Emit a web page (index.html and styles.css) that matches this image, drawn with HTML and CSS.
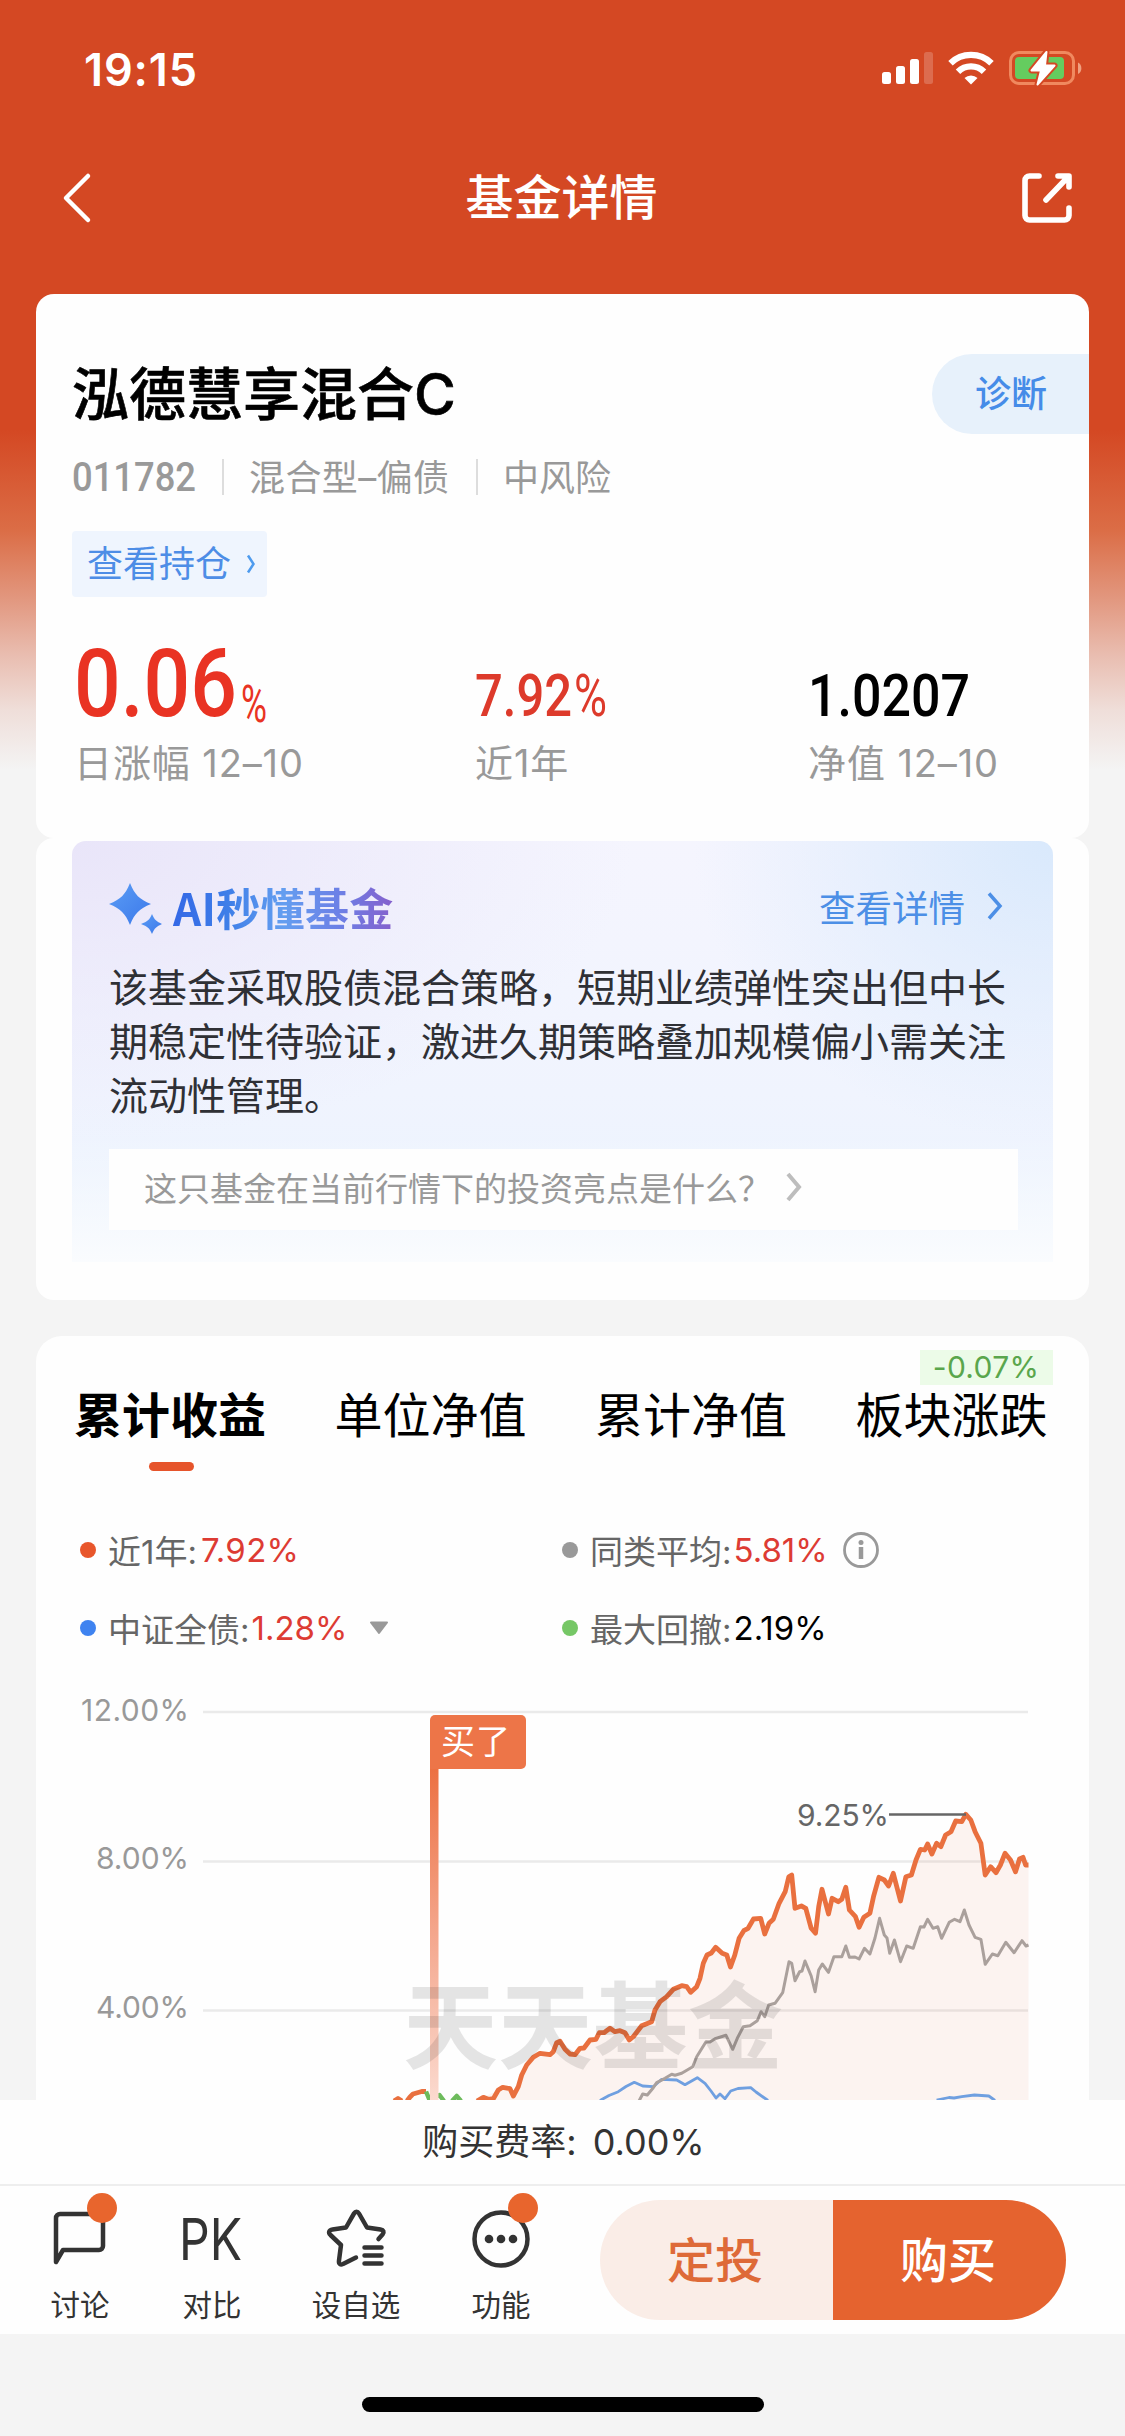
FILE: index.html
```html
<!DOCTYPE html>
<html lang="zh-CN">
<head>
<meta charset="utf-8">
<title>基金详情</title>
<link rel="stylesheet" href="styles.css">
</head>
<body>
<div class="screen">
  <main class="content">
    <div class="status-bar">
      <span class="clock">19:15</span>
      <svg class="status-icons" width="204" height="40" viewBox="0 0 204 40">
        <g fill="#fff">
          <rect x="2" y="22" width="9" height="12" rx="2.5"/>
          <rect x="16" y="16" width="9" height="18" rx="2.5"/>
          <rect x="30" y="9" width="9" height="25" rx="2.5"/>
          <rect x="44" y="2" width="9" height="32" rx="2.5" opacity=".2"/>
        </g>
        <g fill="none" stroke="#fff" stroke-width="6.4">
          <path d="M70.5 13.2a29.5 29.5 0 0 1 41 0"/>
          <path d="M78 21.7a18.6 18.6 0 0 1 26 0"/>
        </g>
        <path d="M84.5 28a9.6 9.6 0 0 1 13 0L91 34.6z" fill="#fff"/>
        <rect x="130.5" y="2.500" width="63" height="31" rx="8.500" fill="none" stroke="#f0895f" stroke-width="3"/>
        <path d="M198 12.500c4.500 2 4.500 9.500 0 11.500z" fill="#f0a080"/>
        <rect x="135" y="7" width="49" height="22" rx="4" fill="#65cc5f"/>
        <path d="M166.500 2 151.500 20.500h9.500L157.500 34.500 174.500 15.500h-9.500z" fill="#fff" stroke="#d44823" stroke-width="6" stroke-linejoin="round"/>
        <path d="M166.500 2 151.500 20.500h9.500L157.500 34.500 174.500 15.500h-9.500z" fill="#fff" stroke="#fff" stroke-width="2" stroke-linejoin="round"/>
      </svg>
    </div>

    <header class="nav">
      <svg width="32" height="54" viewBox="0 0 32 54" fill="none" stroke="#fff" stroke-width="4.500" stroke-linecap="round" stroke-linejoin="round"><path d="M27 5 5 27l22 22"/></svg>
      <h1>基金详情</h1>
      <svg width="54" height="54" viewBox="0 0 54 54" fill="none" stroke="#fff" stroke-width="5.600" stroke-linecap="round" stroke-linejoin="round"><path d="M19 5H9.500a4.500 4.500 0 0 0-4.500 4.500v35A4.500 4.500 0 0 0 9.500 49h35a4.500 4.500 0 0 0 4.500-4.500V37M38 5h11v11M48 6 26 29"/></svg>
    </header>

    <section class="card fund">
      <div class="fund-head">
        <h2>泓德慧享混合C</h2>
        <a class="diagnose">诊断</a>
      </div>
      <div class="meta">
        <svg width="124" height="48" viewBox="0 0 124 48"><text class="din" x="0" y="38" font-size="41" textLength="124" lengthAdjust="spacingAndGlyphs" fill="#999">011782</text></svg>
        <span class="sep"></span>
        <span class="meta-type">混合型–偏债</span>
        <span class="sep"></span>
        <span>中风险</span>
      </div>
      <a class="holdings">查看持仓
        <svg width="10" height="20" viewBox="0 0 10 20" fill="none" stroke="#4e9bee" stroke-width="2.500"><path d="m2 1.500 5.500 8.500L2 18.500"/></svg>
      </a>
      <div class="metrics">
        <div class="metric">
          <svg width="200" height="80" viewBox="0 0 200 80" fill="#e93323">
            <text class="din" x="0" y="69" font-size="94"><tspan textLength="163" lengthAdjust="spacingAndGlyphs">0.06</tspan><tspan class="thin" x="167" y="75" font-size="52" textLength="26" lengthAdjust="spacingAndGlyphs">%</tspan></text>
          </svg>
          <span>日涨幅 12–10</span>
        </div>
        <div class="metric">
          <svg width="140" height="80" viewBox="0 0 140 80" fill="#dd3a2b"><text class="din" y="69" font-size="59"><tspan x="0" textLength="97" lengthAdjust="spacingAndGlyphs">7.92</tspan><tspan class="thin" x="99" textLength="33" lengthAdjust="spacingAndGlyphs">%</tspan></text></svg>
          <span>近1年</span>
        </div>
        <div class="metric">
          <svg width="180" height="80" viewBox="0 0 180 80"><text class="din" x="0" y="69" font-size="59" textLength="162" lengthAdjust="spacingAndGlyphs">1.0207</text></svg>
          <span>净值 12–10</span>
        </div>
      </div>
    </section>

    <section class="card ai-card">
      <div class="ai-panel">
        <div class="ai-head">
          <svg width="54" height="54" viewBox="0 0 54 54">
            <defs><linearGradient id="spark" x1="0" y1="0" x2="1" y2="1"><stop offset="0" stop-color="#5b9df5"/><stop offset="1" stop-color="#3b78ea"/></linearGradient></defs>
            <path d="M21 1C26 13 30 17 42 22 30 27 26 31 21 43 16 31 12 27 0 22 12 17 16 13 21 1z" fill="url(#spark)"/>
            <path d="M43 32C45.500 38 47.500 39.500 53 42 47.500 44.500 45.500 46 43 52 40.500 46 38.500 44.500 32 42 38.500 39.500 40.500 38 43 32z" fill="url(#spark)"/>
          </svg>
          <h3>AI秒懂基金</h3>
          <a>查看详情
            <svg width="18" height="30" viewBox="0 0 18 30" fill="none" stroke="#4c8fe6" stroke-width="3.500"><path d="m3 2.500 11 12.500L3 27.500"/></svg>
          </a>
        </div>
        <p>该基金采取股债混合策略，短期业绩弹性突出但中长期稳定性待验证，激进久期策略叠加规模偏小需关注流动性管理。</p>
        <div class="question">
          <span>这只基金在当前行情下的投资亮点是什么？</span>
          <svg width="20" height="32" viewBox="0 0 20 32" fill="none" stroke="#bdbdbd" stroke-width="4"><path d="m4 3 11 13L4 29"/></svg>
        </div>
      </div>
    </section>

    <section class="card returns">
      <nav class="tabs">
        <a class="active">累计收益</a>
        <a>单位净值</a>
        <a>累计净值</a>
        <a>板块涨跌<span class="tag">-0.07%</span></a>
      </nav>
      <div class="legend">
        <div><i class="dot orange"></i><span>近1年:</span><b class="up wide">7.92%</b></div>
        <div><i class="dot gray"></i><span>同类平均:</span><b class="up">5.81%</b>
          <svg class="info" width="38" height="38" viewBox="0 0 38 38"><circle cx="19" cy="19" r="16.500" fill="none" stroke="#999" stroke-width="2.800"/><path d="M19 16v12" stroke="#999" stroke-width="4.500"/><circle cx="19" cy="11.500" r="2.500" fill="#999"/></svg>
        </div>
        <div><i class="dot blue"></i><span>中证全债:</span><b class="up">1.28%</b>
          <svg class="caret" width="20" height="14" viewBox="0 0 20 14"><path d="M2 1.500h16L10 12z" fill="#999" stroke="#999" stroke-width="2" stroke-linejoin="round"/></svg>
        </div>
        <div><i class="dot green"></i><span>最大回撤:</span><b>2.19%</b></div>
      </div>
      <svg class="chart" width="1053" height="420" viewBox="36 1680 1053 420">
        <defs>
          <linearGradient id="pole" x1="0" y1="0" x2="0" y2="1"><stop offset="0" stop-color="#ec6f40"/><stop offset=".5" stop-color="#f4a68c"/><stop offset="1" stop-color="#fbdacf"/></linearGradient>
        </defs>
        <path d="M203 1712H1028M203 1861.500H1028M203 2010.500H1028" stroke="#eaeaea" stroke-width="2.500"/>
        <g class="axis">
          <text x="81" y="1720.500" textLength="108">12.00%</text>
          <text x="96" y="1869" textLength="93">8.00%</text>
          <text x="96" y="2018" textLength="93">4.00%</text>
        </g>
        <path fill="#e8643a" fill-opacity=".07" d="M479 2100L483.300 2097.300 498.300 2090 502.700 2087.300 510 2088.700 513.300 2096 518.300 2086.700 521.700 2075 526.700 2065 533.300 2057.300 540 2053.300 550 2054.700 553.300 2051.700 556.700 2042.700 560 2041.300 565 2049.300 570 2054 575 2054.700 580 2048.300 590 2040 599.300 2032.700 610 2028.300 625 2032.700 629.300 2040 633.300 2036.700 641.700 2025.700 651.700 2021.700 655 2010 660 2001.700 666.700 1996.700 673.300 1989.300 681.700 1985.700 690.700 1992.300 696.700 1986.700 700 1978.300 703.300 1963.300 707 1955 715.700 1947.300 726.800 1955 730.500 1967 734.800 1955 739.100 1938.300 743.800 1930.700 753.500 1919 760.700 1918.300 764.700 1934 769 1923.300 773.300 1919.300 779.100 1903.300 785.200 1891.700 788.800 1876.700 791.700 1875 795 1908.300 805.800 1908.300 811.200 1928.300 815.500 1933.300 818.700 1906.700 822 1889.300 828.500 1914 832.100 1898.300 841.800 1899.300 845.800 1887.300 849.400 1910 855.500 1916.700 859.100 1927.300 863.800 1917.300 869.900 1913.300 873.500 1896.700 878.900 1877.300 888.600 1886 893.300 1873.300 900.500 1901 905.900 1876.700 911.400 1875 916 1860 920.400 1849.300 927.600 1844 931.900 1854 936.600 1843.300 945.600 1835 951 1831.700 955.700 1821 965.800 1814.300 970.800 1820 975.100 1831.700 980.900 1843.300 985.200 1875 990.600 1866.700 996 1872.700 1005 1853.300 1010.500 1860 1015.500 1871.700 1023 1857.300 1028.500 1865V2100z"/>
        <g fill="none" stroke-linejoin="round">
          <path stroke="#6f9fe0" stroke-width="2.800" d="M600 2100.500L609 2095.500 618.300 2091.700 626 2086.500 634.300 2082.300 642.700 2086 653.300 2086.700 661.700 2079.300 676.700 2080 685 2084.700 697.300 2077.700 705 2083.300 711 2091 716 2098 720 2094 725 2098.700 730.700 2091 738 2088.500 750.700 2087.700 756 2092 768 2100.500M936.600 2100L949 2097.500 954 2098 961.800 2096.700 974.400 2095 988.800 2096 995 2100.500"/>
          <path stroke="#aaa09c" stroke-width="3" d="M639 2101L642.700 2094 647.300 2095 653.300 2087.700 656.700 2082.700 665 2078.300 671.700 2074.300 675 2075.300 681.700 2073.300 692.700 2066.700 696.700 2056.700 706 2041.700 710 2042 715 2038.700 726 2035.300 732.700 2049.300 737.300 2038.300 743.300 2026.700 750 2025.700 757.300 2020.700 761 2011.700 764.700 2016.700 768.700 2005 775 2003.300 782.700 1992.700 789 1961.700 791.700 1963.300 795 1980.700 799.600 1971.700 802 1971 805 1961 811.200 1976 815.100 1991.700 818.700 1970 822.300 1964 828.500 1972.300 833.900 1956.700 841.800 1956.700 845.800 1946 849.400 1957.300 855 1957 859.100 1959 864.500 1948.300 869.900 1954 875 1938 879.600 1918.300 884.300 1935 887 1938 889.700 1953.300 894.400 1940 900.500 1961.700 906.700 1946 913.200 1948.300 920.400 1926.700 924 1927 927.600 1919.300 933 1928.300 937.700 1926.700 941.600 1938.300 949.200 1922.300 954.600 1919.300 960 1921.700 964.300 1910 969 1925 975.100 1937.300 980.900 1939.300 985.200 1964.300 992.400 1954 997.800 1955.700 1005.800 1942.300 1014.100 1952.700 1022 1940.700 1026 1946 1028.500 1945"/>
          <path stroke="#e9703f" stroke-width="4.800" d="M394 2101L398 2098.500 402 2101M407 2101L410 2097 413 2094 421.700 2091.500 426 2091.500M477 2101L483.300 2097.300 488.300 2099.300 493.300 2098.700 498.300 2090 502.700 2087.300 510 2088.700 513.300 2096 518.300 2086.700 521.700 2075 526.700 2065 533.300 2057.300 540 2053.300 550 2054.700 553.300 2051.700 556.700 2042.700 560 2041.300 565 2049.300 570 2054 575 2054.700 580 2048.300 584 2048 590 2040 596 2039.300 599.300 2032.700 604 2032.700 610 2028.300 615 2031.700 620 2030.700 625 2032.700 629.300 2040 633.300 2036.700 641.700 2025.700 651.700 2021.700 655 2010 660 2001.700 666.700 1996.700 673.300 1989.300 681.700 1985.700 686.700 1986.700 690.700 1992.300 696.700 1986.700 700 1978.300 703.300 1963.300 707 1955 711.300 1953 715.700 1947.300 722.200 1953.300 726.800 1955 730.500 1967 734.800 1955 739.100 1938.300 743.800 1930.700 748.100 1928.300 753.500 1919 760.700 1918.300 764.700 1934 769 1923.300 773.300 1919.300 779.100 1903.300 785.200 1891.700 788.800 1876.700 791.700 1875 795 1908.300 801.400 1906 805.800 1908.300 811.200 1928.300 815.500 1933.300 818.700 1906.700 822 1889.300 828.500 1914 832.100 1898.300 838.200 1901.700 841.800 1899.300 845.800 1887.300 849.400 1910 855.500 1916.700 859.100 1927.300 863.800 1917.300 869.900 1913.300 873.500 1896.700 878.900 1877.300 884.300 1880 888.600 1886 893.300 1873.300 900.500 1901 905.900 1876.700 911.400 1875 916 1860 920.400 1849.300 924.700 1850 927.600 1844 931.900 1854 936.600 1843.300 940.900 1846.700 945.600 1835 951 1831.700 955.700 1821 961.800 1821.700 965.800 1814.300 970.800 1820 975.100 1831.700 980.900 1843.300 985.200 1875 990.600 1866.700 996 1872.700 1000.400 1865 1005 1853.300 1010.500 1860 1015.500 1871.700 1019.500 1859 1023 1857.300 1025.600 1865 1028.500 1865"/>
          <path stroke="#6dbb5c" stroke-width="4.500" d="M426 2091.500L430 2101M434 2097.500L439.500 2095 444 2101M452 2101L456.700 2096 461 2101"/>
        </g>
        <path d="M889 1814.500H966" stroke="#666" stroke-width="2.500"/>
        <text x="797" y="1826" textLength="92" class="peak">9.25%</text>
        <rect x="430" y="1765" width="8.500" height="335" fill="url(#pole)"/>
        <path d="M430 1769v-49a5 5 0 0 1 5-5h86a5 5 0 0 1 5 5v44a5 5 0 0 1-5 5z" fill="#ed7548"/>
        <text x="441" y="1754" textLength="69" class="bought">买了</text>
        <text x="403" y="2062" textLength="380" class="watermark">天天基金</text>
      </svg>
    </section>
  </main>

  <footer class="footer">
    <div class="fee"><span>购买费率:</span><span>0.00%</span></div>
    <div class="toolbar">
      <div class="tool discuss">
        <svg width="60" height="60" viewBox="0 0 60 60" fill="none" stroke="#333" stroke-width="4.500" stroke-linejoin="round"><path d="M6 54V10a4 4 0 0 1 4-4h39a4 4 0 0 1 4 4v28a4 4 0 0 1-4 4H13z"/></svg>
        <span>讨论</span><i class="badge"></i>
      </div>
      <div class="tool compare">
        <svg width="64" height="60" viewBox="0 0 64 60"><text x="-1" y="52" textLength="63" lengthAdjust="spacingAndGlyphs" class="pk">PK</text></svg>
        <span>对比</span>
      </div>
      <div class="tool favorite">
        <svg width="62" height="60" viewBox="0 0 62 60" fill="none" stroke="#333" stroke-width="4.500" stroke-linecap="round" stroke-linejoin="round"><path d="M53.500 31l4-4.500c2-2.500 1-4.500-2-5L42 19.500 34 5.500c-1.500-2.500-3.500-2.500-5 0L21 19.500 7.500 21.500c-3.500.5-4.500 3-2 5.500l10.500 10-2 15.500c-.5 3.500 1.500 4.500 4 3.500L31 49.500M39.500 39.500h17M39.500 47.500h17M39.500 55.500h17"/></svg>
        <span>设自选</span>
      </div>
      <div class="tool more">
        <svg width="60" height="60" viewBox="0 0 60 60"><circle cx="30" cy="31" r="26.500" fill="none" stroke="#333" stroke-width="4.500"/><g fill="#333"><circle cx="18" cy="31" r="4.300"/><circle cx="30" cy="31" r="4.300"/><circle cx="42" cy="31" r="4.300"/></g></svg>
        <span>功能</span><i class="badge"></i>
      </div>
      <div class="actions"><button class="plan">定投</button><button class="buy">购买</button></div>
    </div>
    <div class="home-area"><div class="home-bar"></div></div>
  </footer>
</div>
</body>
</html>
```
FILE: styles.css
```css
* { box-sizing: border-box; }
body { margin: 0; font-family: Inter, "Noto Sans CJK SC", sans-serif; color: #000; }
h1, h2, h3, p { margin: 0; }
svg { display: block; flex: none; overflow: visible; }

.screen { width: 1125px; height: 2436px; overflow: hidden; background: #f4f4f4; }
.content {
  height: 2100px; overflow: hidden;
  background: linear-gradient(180deg, #d44823 0, #d44823 430px, #db6d46 530px, #e29880 600px, #e9bdb0 655px, #efded9 710px, #f4f4f4 770px);
}

.status-bar { display: flex; justify-content: space-between; align-items: center; height: 139px; padding: 0 41px 0 84px; color: #fff; }
.clock { font-size: 45px; font-weight: 600; letter-spacing: .9px; }
.nav { display: flex; justify-content: space-between; align-items: center; height: 118px; padding: 0 51px 0 61px; color: #fff; }
.nav h1 { font-size: 48px; font-weight: 500; line-height: 60px; padding-left: 10px; }

.card { margin: 0 36px; background: #fefefe; border-radius: 18px; }
.fund { margin-top: 37px; height: 544px; padding-top: 60px; }
.fund-head { display: flex; justify-content: space-between; align-items: center; height: 80px; padding-left: 36px; }
.fund-head h2 { padding-top: 2px; font-size: 57px; font-weight: 500; line-height: 80px; -webkit-text-stroke: .6px #000; }
.diagnose { width: 157px; height: 80px; padding-left: 43px; border-radius: 40px 0 0 40px; background: #e7f1fb; color: #468ce8; font-size: 36px; font-weight: 500; line-height: 80px; }
.meta { display: flex; align-items: center; height: 40px; margin: 23px 0 0 36px; color: #999; font-size: 36px; }
.meta span { padding-top: 1px; line-height: 40px; white-space: nowrap; }
.meta .sep { width: 2px; height: 36px; margin: 0 25px 0 26px; padding: 0; background: #ddd; }
.meta-type { width: 201px; letter-spacing: .4px; }
.din { font-family: Roboto, sans-serif; font-weight: 550; }
.thin { font-weight: 450; }
.holdings { display: flex; align-items: center; justify-content: space-between; width: 195px; height: 66px; margin: 34px 0 0 36px; padding: 0 11px 0 15px; border-radius: 4px; background: #eff5fe; color: #4d8de6; font-size: 36px; line-height: 66px; }
.metrics { display: grid; grid-template-columns: 401px 333px 1fr; margin: 50px 0 0 38px; }
.metric span { display: block; margin-top: 14px; color: #999; font-size: 38px; line-height: 44px; letter-spacing: .9px; white-space: nowrap; }

.ai-card { height: 462px; padding: 3px 36px 0; }
.ai-panel {
  height: 421px; padding: 38px 0 0 37px; border-radius: 14px 14px 0 0;
  background:
    linear-gradient(180deg, rgba(254,254,254,0) 0, rgba(254,254,254,0) 70%, rgba(254,254,254,.8) 100%),
    radial-gradient(ellipse 560px 300px at 0 0, #e9e5f9 0, rgba(233,229,249,0) 100%),
    radial-gradient(ellipse 360px 300px at 100% 0, #d9e9fc 0, rgba(217,233,252,0) 100%),
    linear-gradient(180deg, #f5f5fe 0, #f0f4fe 60%, #eaf3fe 100%);
}
.ai-head { display: flex; align-items: center; height: 60px; }
.ai-head h3 { margin: 0 0 5px 10px; font: bold 44px/60px "Noto Sans CJK SC", sans-serif; letter-spacing: .3px; background: linear-gradient(90deg, #3468e6 0, #3f7fe8 25%, #649ef0 50%, #6c80e6 75%, #8560cc 100%); background-clip: text; -webkit-background-clip: text; color: transparent; }
.ai-head a { display: flex; align-items: center; gap: 21px; margin: 0 49px 6px auto; color: #4c8fe6; font-size: 36.500px; }
.ai-panel p { width: 900px; margin-top: 22px; color: #2f3035; font-size: 39px; line-height: 54px; }
.question { display: flex; align-items: center; gap: 13px; width: 909px; height: 81px; margin-top: 26px; padding: 0 0 5px 35px; background: #fefefe; color: #999; font-size: 33px; }

.returns { margin-top: 36px; height: 800px; border-radius: 26px 26px 0 0; }
.tabs { display: flex; gap: 68.500px; height: 136px; padding: 49px 0 0 38px; }
.tabs a { position: relative; width: 192px; font-size: 48px; line-height: 62px; white-space: nowrap; }
.tabs .active { font-weight: 700; }
.tabs .active::after { content: ""; position: absolute; left: 75px; top: 77px; width: 45px; height: 9px; border-radius: 5px; background: #e6542b; }
.tag { position: absolute; right: -5px; top: -35px; width: 133px; height: 35px; background: #ecfbe8; color: #5aa64c; font-size: 30px; line-height: 35px; text-align: center; letter-spacing: .3px; }
.legend { display: grid; grid-template-columns: 482px 1fr; grid-auto-rows: 78px; margin: 39px 0 0 44px; color: #666; font-size: 33px; }
.legend div { display: flex; align-items: center; }
.legend b { margin-left: 2px; color: #000; font-weight: 400; font-size: 33px; }
.legend .wide { margin-left: 4px; letter-spacing: .3px; }
.legend .up { color: #dd3b33; }
.dot { width: 16px; height: 16px; margin-right: 12px; border-radius: 50%; }
.orange { background: #e8562b; } .gray { background: #999; } .blue { background: #3f83f0; } .green { background: #76c766; }
.info { margin-left: 14px; }
.caret { margin-left: 22px; }
.chart { margin-top: 13px; overflow: hidden; }
.axis { fill: #999; font-size: 30px; }
.peak { fill: #666; font-size: 30px; }
.bought { fill: #fff; font-size: 34px; }
.watermark { fill: #000; fill-opacity: .1; font-size: 95px; font-weight: 700; }

.footer { background: #fefefe; color: #333; }
.fee { display: flex; justify-content: center; gap: 16px; height: 84px; padding-left: 2px; font-size: 36px; line-height: 84px; }
.toolbar { display: flex; position: relative; height: 150px; padding: 15px 0 0 36px; border-top: 2px solid #eee; }
.tool { position: relative; display: flex; flex-direction: column; align-items: center; padding-top: 7px; font-size: 29.500px; line-height: 40px; }
.tool span { margin-top: 17px; white-space: nowrap; }
.discuss { width: 88px; }
.compare { width: 88px; margin-left: 44px; }
.favorite { width: 100px; margin-left: 50px; }
.more { width: 88px; margin-left: 51px; }
.badge { position: absolute; left: 51px; top: -8px; width: 30px; height: 30px; border-radius: 50%; background: #e8652d; }
.pk { font-size: 57px; fill: #333; }
.actions { display: flex; width: 466px; height: 120px; margin: -1px 0 0 55px; border-radius: 60px; overflow: hidden; }
.actions button { flex: 1; padding: 0 3px 7px 0; border: 0; font: 500 48px Inter, "Noto Sans CJK SC", sans-serif; }
.plan { background: #faede7; color: #de6a38; }
.buy { background: #e5632f; color: #fff; }
.home-area { display: flex; justify-content: center; height: 102px; padding-top: 63px; background: #f4f4f4; }
.home-bar { width: 402px; height: 15px; border-radius: 8px; background: #000; }
```
